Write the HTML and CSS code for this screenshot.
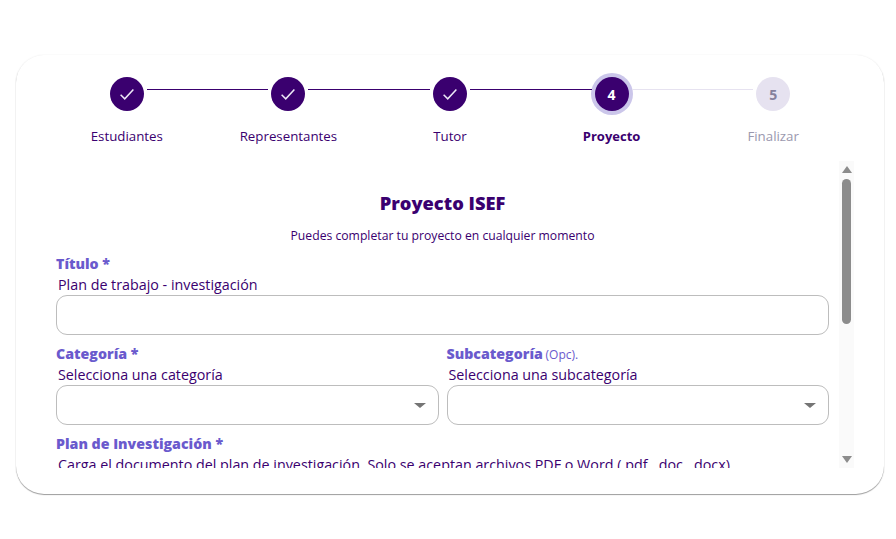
FILE: index.html
```html
<!DOCTYPE html>
<html lang="es">
<head>
    <meta charset="UTF-8">
    <meta name="viewport" content="width=device-width, initial-scale=1.0">
    <title>Proyecto ISEF</title>
    <link rel="stylesheet" href="styles.css">
</head>
<body>
    <div class="card">
        <!-- Pasos del registro -->
        <div class="stepper">
            <div class="step done">
                <div class="step-circle">
                    <svg width="18" height="18" viewBox="0 0 24 24"><path d="M3.5 13l5.5 5.5L20.5 6" fill="none" stroke="#ece8f6" stroke-width="2"/></svg>
                </div>
                <div class="step-label">Estudiantes</div>
            </div>
            <div class="step done">
                <div class="step-circle">
                    <svg width="18" height="18" viewBox="0 0 24 24"><path d="M3.5 13l5.5 5.5L20.5 6" fill="none" stroke="#ece8f6" stroke-width="2"/></svg>
                </div>
                <div class="step-label">Representantes</div>
            </div>
            <div class="step done">
                <div class="step-circle">
                    <svg width="18" height="18" viewBox="0 0 24 24"><path d="M3.5 13l5.5 5.5L20.5 6" fill="none" stroke="#ece8f6" stroke-width="2"/></svg>
                </div>
                <div class="step-label">Tutor</div>
            </div>
            <div class="step active">
                <div class="step-circle">4</div>
                <div class="step-label">Proyecto</div>
            </div>
            <div class="step pending">
                <div class="step-circle">5</div>
                <div class="step-label">Finalizar</div>
            </div>
        </div>

        <div class="form-area">
            <!-- Formulario -->
            <form class="form-scroll">
                <h2 class="form-title">Proyecto ISEF</h2>
                <p class="form-subtitle">Puedes completar tu proyecto en cualquier momento</p>

                <div class="form-group">
                    <label class="field-label" for="titulo">Título *</label>
                    <div class="field-hint">Plan de trabajo - investigación</div>
                    <input class="field-input" type="text" id="titulo" name="titulo">
                </div>

                <div class="form-row">
                    <div class="form-group">
                        <label class="field-label" for="categoria">Categoría *</label>
                        <div class="field-hint">Selecciona una categoría</div>
                        <div class="select-wrap">
                            <select class="field-input" id="categoria" name="categoria"></select>
                        </div>
                    </div>
                    <div class="form-group">
                        <label class="field-label" for="subcategoria">Subcategoría <span class="field-optional">(Opc).</span></label>
                        <div class="field-hint">Selecciona una subcategoría</div>
                        <div class="select-wrap">
                            <select class="field-input" id="subcategoria" name="subcategoria"></select>
                        </div>
                    </div>
                </div>

                <div class="form-group plan-group">
                    <label class="field-label" for="plan">Plan de Investigación *</label>
                    <div class="field-hint">Carga el documento del plan de investigación. Solo se aceptan archivos PDF o Word (.pdf, .doc, .docx)</div>
                    <input class="field-input" type="text" id="plan" name="plan">
                </div>
            </form>

            <!-- Barra de desplazamiento -->
            <div class="scrollbar">
                <div class="scroll-up"></div>
                <div class="scroll-thumb"></div>
                <div class="scroll-down"></div>
            </div>
        </div>
    </div>
</body>
</html>
```

FILE: styles.css
```css
* {
    box-sizing: border-box;
}
body {
    margin: 0;
    height: 539px;
    padding: 55px 12px 45px 16px;
    background-color: #fff;
    font-family: "Open Sans", sans-serif;
    color: #3a006f;
    overflow: hidden;
}
.card {
    height: 439px;
    padding: 22px 30px 26px;
    background-color: #fff;
    border-radius: 28px;
    box-shadow: 0 1px 1px rgba(0, 0, 0, 0.38), 0 0 2px rgba(0, 0, 0, 0.07);
}

/* stepper */
.stepper {
    display: flex;
    height: 84px;
}
.step {
    flex: 1;
    position: relative;
    display: flex;
    flex-direction: column;
    align-items: center;
}
.step + .step::before {
    content: "";
    position: absolute;
    top: 12px;
    left: calc(-50% + 20px);
    right: calc(50% + 20px);
    border-top: 1px solid #3a006f;
}
.step.pending::before {
    border-top-color: #e6e2f0;
}
.step-circle {
    width: 34px;
    height: 34px;
    border-radius: 50%;
    background-color: #3a006f;
    color: #fff;
    display: flex;
    align-items: center;
    justify-content: center;
    font-size: 14px;
    font-weight: 700;
}
.step.active .step-circle {
    box-shadow: 0 0 0 4px #cbc6ea;
}
.step.pending .step-circle {
    background-color: #e6e2f0;
    color: #85809c;
}
.step-label {
    margin-top: 15px;
    font-size: 13.3px;
    line-height: 20px;
}
.step.active .step-label {
    font-size: 13px;
    font-weight: 700;
}
.step.pending .step-label {
    color: #9a98ae;
}

/* form */
.form-area {
    display: flex;
    height: 307px;
}
.form-scroll {
    flex: 1;
    min-width: 0;
    padding: 0 10px;
    overflow: hidden;
}
.form-title {
    margin: 29px 0 0;
    text-align: center;
    font-size: 18.3px;
    line-height: 26px;
    font-weight: 800;
}
.form-subtitle {
    margin: 11px 0 0;
    text-align: center;
    font-size: 12.2px;
    line-height: 18px;
}
.form-group {
    min-width: 0;
}
.form-subtitle + .form-group {
    margin-top: 9px;
}
.form-row {
    display: grid;
    grid-template-columns: 1fr 1fr;
    gap: 8px;
    margin-top: 9px;
}
.plan-group {
    margin-top: 9px;
}
.field-label {
    display: block;
    height: 20px;
    font-size: 14.2px;
    line-height: 20px;
    font-weight: 800;
    color: #6a5acd;
}
.field-optional {
    margin-left: -1px;
    font-size: 12px;
    font-weight: 400;
}
.field-hint {
    padding-left: 2px;
    font-size: 14.3px;
    line-height: 21px;
    white-space: nowrap;
}
.field-input {
    display: block;
    width: 100%;
    height: 40px;
    padding: 0 12px;
    background-color: #fff;
    border: 1px solid #bdbdbd;
    border-radius: 11px;
    font-family: inherit;
    appearance: none;
}
.select-wrap {
    position: relative;
}
.select-wrap::after {
    content: "";
    position: absolute;
    top: 18px;
    right: 13px;
    border-left: 6px solid transparent;
    border-right: 6px solid transparent;
    border-top: 5px solid #757575;
}

/* scrollbar */
.scrollbar {
    width: 15px;
    padding: 5px 3px;
    background-color: #fafafa;
    display: flex;
    flex-direction: column;
}
.scroll-up,
.scroll-down {
    margin-left: -0.5px;
    margin-right: -0.5px;
    border-left: 5px solid transparent;
    border-right: 5px solid transparent;
}
.scroll-up {
    border-bottom: 7px solid #8c8c8c;
}
.scroll-down {
    margin-top: auto;
    border-top: 7px solid #8c8c8c;
}
.scroll-thumb {
    height: 145px;
    margin-top: 6px;
    background-color: #8c8c8c;
    border-radius: 5px;
}
```
